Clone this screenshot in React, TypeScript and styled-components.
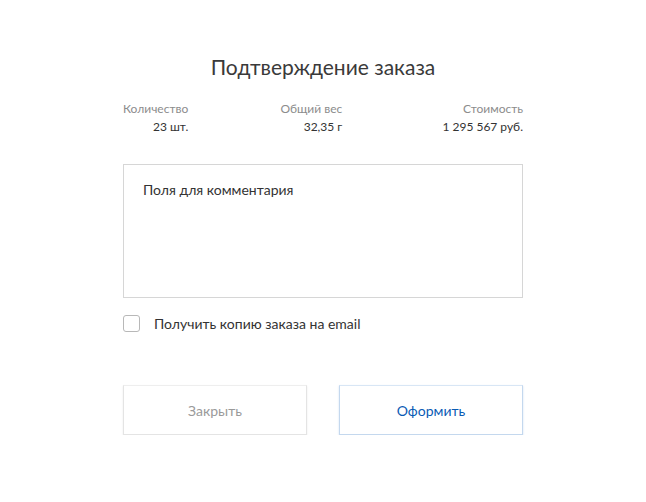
import { createGlobalStyle, styled } from "styled-components";

const GlobalStyle = createGlobalStyle`
  body {
    margin: 0;
    background: #ffffff;
    font-family: Lato, "Open Sans", sans-serif;
  }
`;

const Modal = styled.div`
  width: 400px;
  margin: 0 auto;
  padding-top: 52px;
  display: flex;
  flex-direction: column;
`;

const Title = styled.h1`
  margin: 0;
  font-size: 21px;
  font-weight: 400;
  color: #3a3a3a;
  text-align: center;
  line-height: 30px;
`;

const Stats = styled.div`
  display: flex;
  justify-content: space-between;
  margin-top: 20px;
`;

const Stat = styled.div<{ $shift?: number }>`
  display: flex;
  flex-direction: column;
  align-items: flex-end;
  gap: 4px;
  margin-right: ${(p) => p.$shift ?? 0}px;
`;

const StatLabel = styled.span`
  font-size: 12px;
  color: #8c8c8c;
  line-height: 14px;
`;

const StatValue = styled.span`
  font-size: 12px;
  color: #333333;
  line-height: 14px;
`;

const Comment = styled.textarea`
  margin-top: 30px;
  box-sizing: border-box;
  width: 400px;
  height: 134px;
  border: 1px solid #d6d6d6;
  padding: 16px 18px 16px 19px;
  font-family: Lato, sans-serif;
  font-size: 14px;
  color: #333333;
  resize: none;
  outline: none;
  &::placeholder {
    color: #333333;
  }
`;

const CheckRow = styled.label`
  display: flex;
  align-items: center;
  gap: 14px;
  margin-top: 17px;
  font-size: 14px;
  color: #333333;
  cursor: pointer;
`;

const Box = styled.span`
  width: 15px;
  height: 15px;
  border: 1px solid #b8b8b8;
  border-radius: 3px;
`;

const Actions = styled.div`
  display: flex;
  justify-content: space-between;
  margin-top: 53px;
`;

const Button = styled.button<{ $primary?: boolean }>`
  width: 184px;
  height: 50px;
  background: #ffffff;
  border: 1px solid ${(p) => (p.$primary ? "#c4d8ee" : "#e4e4e4")};
  border-top-color: ${(p) => (p.$primary ? "#d8e6f5" : "#eeeeee")};
  box-shadow: 0 1px 2px ${(p) => (p.$primary ? "rgba(80,140,210,0.25)" : "rgba(0,0,0,0.08)")};
  font-family: Lato, sans-serif;
  font-size: 14px;
  color: ${(p) => (p.$primary ? "#0a5bb4" : "#9a9a9a")};
  cursor: pointer;
`;

export default function App() {
  return (
    <>
      <GlobalStyle />
      <Modal>
        <Title>Подтверждение заказа</Title>
        <Stats>
          <Stat>
            <StatLabel>Количество</StatLabel>
            <StatValue>23 шт.</StatValue>
          </Stat>
          <Stat $shift={8}>
            <StatLabel>Общий вес</StatLabel>
            <StatValue>32,35 г</StatValue>
          </Stat>
          <Stat>
            <StatLabel>Стоимость</StatLabel>
            <StatValue>1 295 567 руб.</StatValue>
          </Stat>
        </Stats>
        <Comment placeholder="Поля для комментария" />
        <CheckRow>
          <Box />
          Получить копию заказа на email
        </CheckRow>
        <Actions>
          <Button>Закрыть</Button>
          <Button $primary>Оформить</Button>
        </Actions>
      </Modal>
    </>
  );
}
